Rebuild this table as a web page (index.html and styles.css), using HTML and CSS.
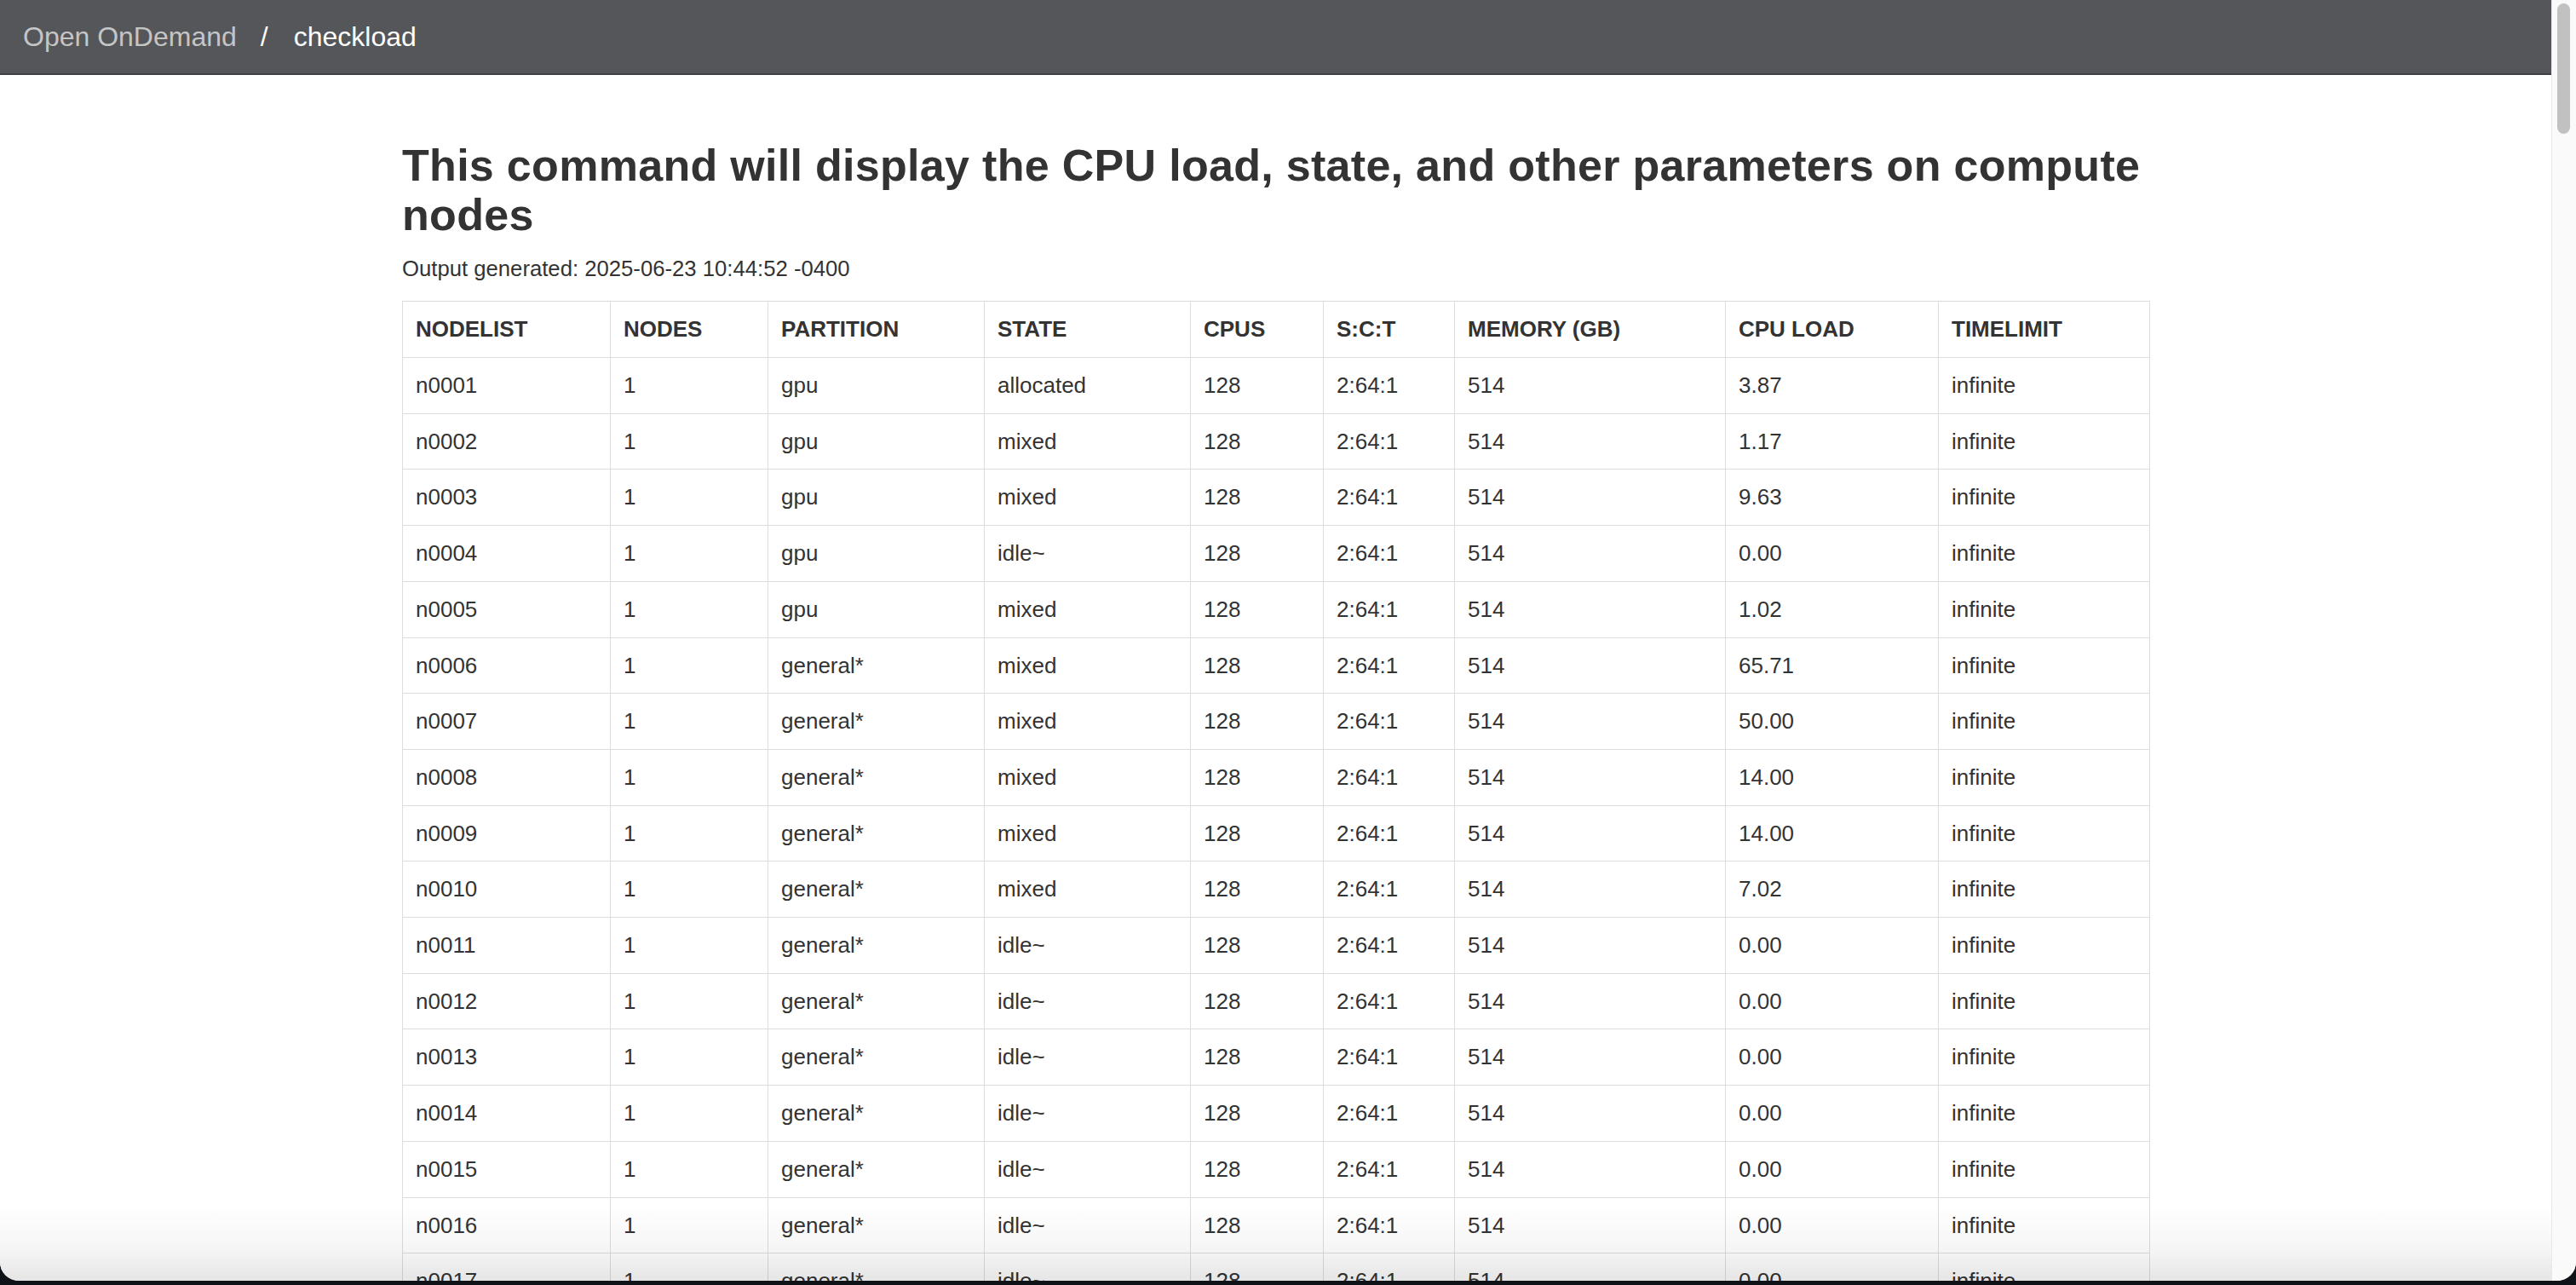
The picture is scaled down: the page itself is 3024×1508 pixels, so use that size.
FILE: index.html
```html
<!DOCTYPE html>
<html lang="en">
<head>
<meta charset="utf-8">
<title>checkload</title>
<link rel="stylesheet" href="styles.css">
</head>
<body>
<div class="screen">
  <div class="window">
    <div class="page">
      <header class="navbar">
        <span class="brand">Open OnDemand</span>
        <span class="sep">/</span>
        <span class="current">checkload</span>
      </header>
      <main class="content">
        <h1 class="title">This command will display the CPU load, state, and other parameters on compute nodes</h1>
        <p class="generated">Output generated: 2025-06-23 10:44:52 -0400</p>
        <table class="nodes">
          <colgroup>
            <col class="c-nodelist"><col class="c-nodes"><col class="c-partition"><col class="c-state"><col class="c-cpus"><col class="c-sct"><col class="c-mem"><col class="c-load"><col class="c-time">
          </colgroup>
          <thead>
            <tr><th>NODELIST</th><th>NODES</th><th>PARTITION</th><th>STATE</th><th>CPUS</th><th>S:C:T</th><th>MEMORY (GB)</th><th>CPU LOAD</th><th>TIMELIMIT</th></tr>
          </thead>
          <tbody>
            <tr><td>n0001</td><td>1</td><td>gpu</td><td>allocated</td><td>128</td><td>2:64:1</td><td>514</td><td>3.87</td><td>infinite</td></tr>
            <tr><td>n0002</td><td>1</td><td>gpu</td><td>mixed</td><td>128</td><td>2:64:1</td><td>514</td><td>1.17</td><td>infinite</td></tr>
            <tr><td>n0003</td><td>1</td><td>gpu</td><td>mixed</td><td>128</td><td>2:64:1</td><td>514</td><td>9.63</td><td>infinite</td></tr>
            <tr><td>n0004</td><td>1</td><td>gpu</td><td>idle~</td><td>128</td><td>2:64:1</td><td>514</td><td>0.00</td><td>infinite</td></tr>
            <tr><td>n0005</td><td>1</td><td>gpu</td><td>mixed</td><td>128</td><td>2:64:1</td><td>514</td><td>1.02</td><td>infinite</td></tr>
            <tr><td>n0006</td><td>1</td><td>general*</td><td>mixed</td><td>128</td><td>2:64:1</td><td>514</td><td>65.71</td><td>infinite</td></tr>
            <tr><td>n0007</td><td>1</td><td>general*</td><td>mixed</td><td>128</td><td>2:64:1</td><td>514</td><td>50.00</td><td>infinite</td></tr>
            <tr><td>n0008</td><td>1</td><td>general*</td><td>mixed</td><td>128</td><td>2:64:1</td><td>514</td><td>14.00</td><td>infinite</td></tr>
            <tr><td>n0009</td><td>1</td><td>general*</td><td>mixed</td><td>128</td><td>2:64:1</td><td>514</td><td>14.00</td><td>infinite</td></tr>
            <tr><td>n0010</td><td>1</td><td>general*</td><td>mixed</td><td>128</td><td>2:64:1</td><td>514</td><td>7.02</td><td>infinite</td></tr>
            <tr><td>n0011</td><td>1</td><td>general*</td><td>idle~</td><td>128</td><td>2:64:1</td><td>514</td><td>0.00</td><td>infinite</td></tr>
            <tr><td>n0012</td><td>1</td><td>general*</td><td>idle~</td><td>128</td><td>2:64:1</td><td>514</td><td>0.00</td><td>infinite</td></tr>
            <tr><td>n0013</td><td>1</td><td>general*</td><td>idle~</td><td>128</td><td>2:64:1</td><td>514</td><td>0.00</td><td>infinite</td></tr>
            <tr><td>n0014</td><td>1</td><td>general*</td><td>idle~</td><td>128</td><td>2:64:1</td><td>514</td><td>0.00</td><td>infinite</td></tr>
            <tr><td>n0015</td><td>1</td><td>general*</td><td>idle~</td><td>128</td><td>2:64:1</td><td>514</td><td>0.00</td><td>infinite</td></tr>
            <tr><td>n0016</td><td>1</td><td>general*</td><td>idle~</td><td>128</td><td>2:64:1</td><td>514</td><td>0.00</td><td>infinite</td></tr>
            <tr><td>n0017</td><td>1</td><td>general*</td><td>idle~</td><td>128</td><td>2:64:1</td><td>514</td><td>0.00</td><td>infinite</td></tr>
          </tbody>
        </table>
      </main>
      <div class="fade"></div>
    </div>
    <div class="scrollbar"><div class="thumb"></div></div>
  </div>
</div>
</body>
</html>
```

FILE: styles.css
```css
html, body {
  margin: 0;
  padding: 0;
  height: 1508px;
  overflow: hidden;
}
body {
  font-family: "Liberation Sans", Arial, Helvetica, sans-serif;
  color: #333333;
  background: #0f1318;
}
.screen {
  height: 1508px;
  display: flex;
  flex-direction: column;
  background: #0f1318;
}
.window {
  height: 1503px;
  display: flex;
  flex-direction: row;
  background: #ffffff;
  border-bottom-left-radius: 22px;
  border-bottom-right-radius: 22px;
  overflow: hidden;
  position: relative;
}
.page {
  flex: 1;
  position: relative;
  overflow: hidden;
  background: #ffffff;
}
.navbar {
  height: 86px;
  background: #55565a;
  border-bottom: 2px solid #3f4043;
  display: flex;
  align-items: center;
  padding-left: 27px;
  font-size: 32px;
  line-height: 40px;
}
.brand {
  color: #c4c5c6;
}
.sep {
  color: #ffffff;
  margin: 0 30px 0 28px;
}
.current {
  color: #ffffff;
}
.content {
  width: 2051px;
  margin: 0 auto;
}
.title {
  font-size: 52px;
  line-height: 58px;
  font-weight: bold;
  letter-spacing: 0.3px;
  color: #333333;
  margin: 77px 0 15px 0;
}
.generated {
  font-size: 25.7px;
  line-height: 39px;
  margin: 0 0 18px 0;
}
.nodes {
  width: 2051px;
  table-layout: fixed;
  border-collapse: collapse;
  font-size: 26px;
}
.c-nodelist { width: 244px; }
.c-nodes { width: 185px; }
.c-partition { width: 254px; }
.c-state { width: 242px; }
.c-cpus { width: 156px; }
.c-sct { width: 154px; }
.c-mem { width: 318px; }
.c-load { width: 250px; }
.c-time { width: 248px; }
.nodes th,
.nodes td {
  border: 1px solid #dddddd;
  padding: 13px 15px;
  text-align: left;
  vertical-align: middle;
  white-space: nowrap;
}
.nodes th {
  font-weight: bold;
  line-height: 39px;
  color: #333333;
}
.nodes td {
  line-height: 38.7px;
}
.fade {
  position: absolute;
  left: 0;
  right: 0;
  bottom: 0;
  height: 90px;
  background: linear-gradient(to bottom, rgba(0,0,0,0) 0%, rgba(0,0,0,0.04) 60%, rgba(0,0,0,0.1) 100%);
  pointer-events: none;
}
.scrollbar {
  width: 28px;
  flex: none;
  background: #fafafa;
  border-left: 1px solid #e8e8e8;
  position: relative;
}
.thumb {
  margin: 4px 0 0 6px;
  width: 15px;
  height: 153px;
  border-radius: 8px;
  background: #c1c1c1;
}
```
